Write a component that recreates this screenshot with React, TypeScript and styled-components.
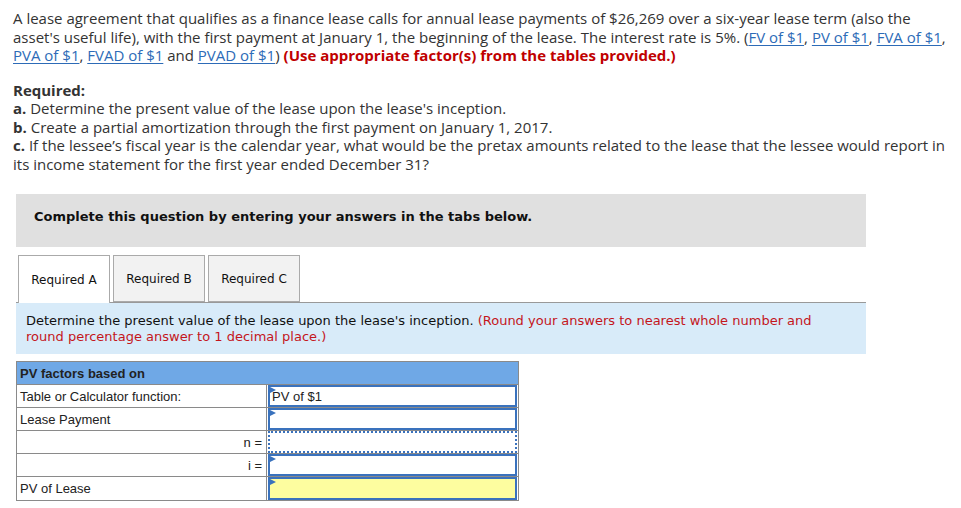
import React from "react";
import styled, { createGlobalStyle } from "styled-components";

const Global = createGlobalStyle`
  html, body { margin: 0; padding: 0; background: #fff; }
  body { font-family: "Open Sans", "Liberation Sans", sans-serif; }
`;

const Page = styled.div`
  padding: 9px 13px 0 13px;
  width: 961px;
  box-sizing: border-box;
`;

const Para = styled.p`
  margin: 0;
  font-family: "Open Sans", "Liberation Sans", sans-serif;
  font-size: 15px;
  line-height: 18.5px;
  color: #333;
  white-space: nowrap;
`;

const Link = styled.a`
  color: #2d6bb7;
  text-decoration: underline;
  text-underline-offset: 2px;
`;

const Red = styled.span`
  color: #c00000;
  font-weight: 700;
`;

const Required = styled.div`
  margin-top: 16px;
`;

const B = styled.b`
  font-weight: 700;
`;

const Banner = styled.div`
  margin: 21px 0 0 3px;
  width: 850px;
  height: 53px;
  background: #e0e0e0;
  padding: 15px 0 0 18px;
  box-sizing: border-box;
  font-family: "DejaVu Sans", Verdana, sans-serif;
  font-weight: 700;
  font-size: 13px;
  line-height: 16px;
  color: #111;
`;

const Tabs = styled.div`
  margin: 8px 0 0 3px;
  width: 850px;
  display: flex;
  gap: 3px;
  padding-left: 2px;
  box-sizing: border-box;
  border-bottom: 1px solid #999;
  height: 48px;
`;

const Tab = styled.div<{ $active?: boolean }>`
  width: 92px;
  height: ${(p) => (p.$active ? "48px" : "47px")};
  box-sizing: border-box;
  border: 1px solid #aaa;
  border-bottom: ${(p) => (p.$active ? "none" : "1px solid #aaa")};
  background: ${(p) => (p.$active ? "#fff" : "#f2f2f2")};
  display: flex;
  align-items: center;
  justify-content: center;
  font-family: "DejaVu Sans", Verdana, sans-serif;
  font-size: 12px;
  color: #111;
  position: relative;
  z-index: 1;
`;

const Info = styled.div`
  margin-left: 3px;
  width: 850px;
  background: #d8ebf9;
  box-sizing: border-box;
  padding: 10px 10px 9px 10px;
  font-family: "DejaVu Sans", Verdana, sans-serif;
  font-size: 13px;
  line-height: 16px;
  color: #111;
`;

const InfoRed = styled.span`
  color: #c4161c;
`;

const Table = styled.div`
  margin: 7px 0 0 3px;
  width: 503px;
  border: 1px solid #8a8a8a;
  box-sizing: border-box;
  font-family: "Liberation Sans", Arial, sans-serif;
  font-size: 13px;
  color: #222;
`;

const Header = styled.div`
  height: 22px;
  background: #6fa8e6;
  display: flex;
  align-items: center;
  padding-left: 3px;
  font-weight: 700;
  border-bottom: 1px solid #8a8a8a;
`;

const Row = styled.div<{ $last?: boolean }>`
  display: grid;
  grid-template-columns: 250px 1fr;
  height: 23px;
  border-bottom: ${(p) => (p.$last ? "none" : "1px solid #8a8a8a")};
  box-sizing: border-box;
`;

const Label = styled.div<{ $right?: boolean }>`
  display: flex;
  align-items: center;
  justify-content: ${(p) => (p.$right ? "flex-end" : "flex-start")};
  padding: 0 ${(p) => (p.$right ? "4px" : "3px")};
  border-right: 1px solid #8a8a8a;
`;

const Input = styled.div<{ $dotted?: boolean; $yellow?: boolean; $flag?: boolean }>`
  position: relative;
  margin: 0 1px 0 1px;
  border: 2px ${(p) => (p.$dotted ? "dotted" : "solid")} #3a72bd;
  background: ${(p) => (p.$yellow ? "#fdfd9f" : "#fff")};
  display: flex;
  align-items: center;
  padding-left: 2px;
  box-sizing: border-box;
  &::before {
    content: "";
    display: ${(p) => (p.$flag ? "block" : "none")};
    position: absolute;
    left: 0;
    top: 0;
    border-top: 3px solid transparent;
    border-bottom: 3px solid transparent;
    border-left: 6px solid #3a72bd;
  }
`;

export default function App() {
  return (
    <>
      <Global />
      <Page>
        <Para>
          A lease agreement that qualifies as a finance lease calls for annual lease payments of $26,269 over a six-year lease term (also the
          <br />
          asset's useful life), with the first payment at January 1, the beginning of the lease. The interest rate is 5%. (
          <Link>FV of $1</Link>, <Link>PV of $1</Link>, <Link>FVA of $1</Link>,
          <br />
          <Link>PVA of $1</Link>, <Link>FVAD of $1</Link> and <Link>PVAD of $1</Link>){" "}
          <Red>(Use appropriate factor(s) from the tables provided.)</Red>
        </Para>
        <Required>
          <Para>
            <B>Required:</B>
            <br />
            <B>a.</B> Determine the present value of the lease upon the lease's inception.
            <br />
            <B>b.</B> Create a partial amortization through the first payment on January 1, 2017.
            <br />
            <B>c.</B> If the lessee’s fiscal year is the calendar year, what would be the pretax amounts related to the lease that the lessee would report in
            <br />
            its income statement for the first year ended December 31?
          </Para>
        </Required>
        <Banner>Complete this question by entering your answers in the tabs below.</Banner>
        <Tabs>
          <Tab $active>Required A</Tab>
          <Tab>Required B</Tab>
          <Tab>Required C</Tab>
        </Tabs>
        <Info>
          Determine the present value of the lease upon the lease's inception.{" "}
          <InfoRed>
            (Round your answers to nearest whole number and
            <br />
            round percentage answer to 1 decimal place.)
          </InfoRed>
        </Info>
        <Table>
          <Header>PV factors based on</Header>
          <Row>
            <Label>Table or Calculator function:</Label>
            <Input $flag>PV of $1</Input>
          </Row>
          <Row>
            <Label>Lease Payment</Label>
            <Input $flag />
          </Row>
          <Row>
            <Label $right>n =</Label>
            <Input $dotted />
          </Row>
          <Row>
            <Label $right>i =</Label>
            <Input $flag />
          </Row>
          <Row $last>
            <Label>PV of Lease</Label>
            <Input $flag $yellow />
          </Row>
        </Table>
      </Page>
    </>
  );
}
